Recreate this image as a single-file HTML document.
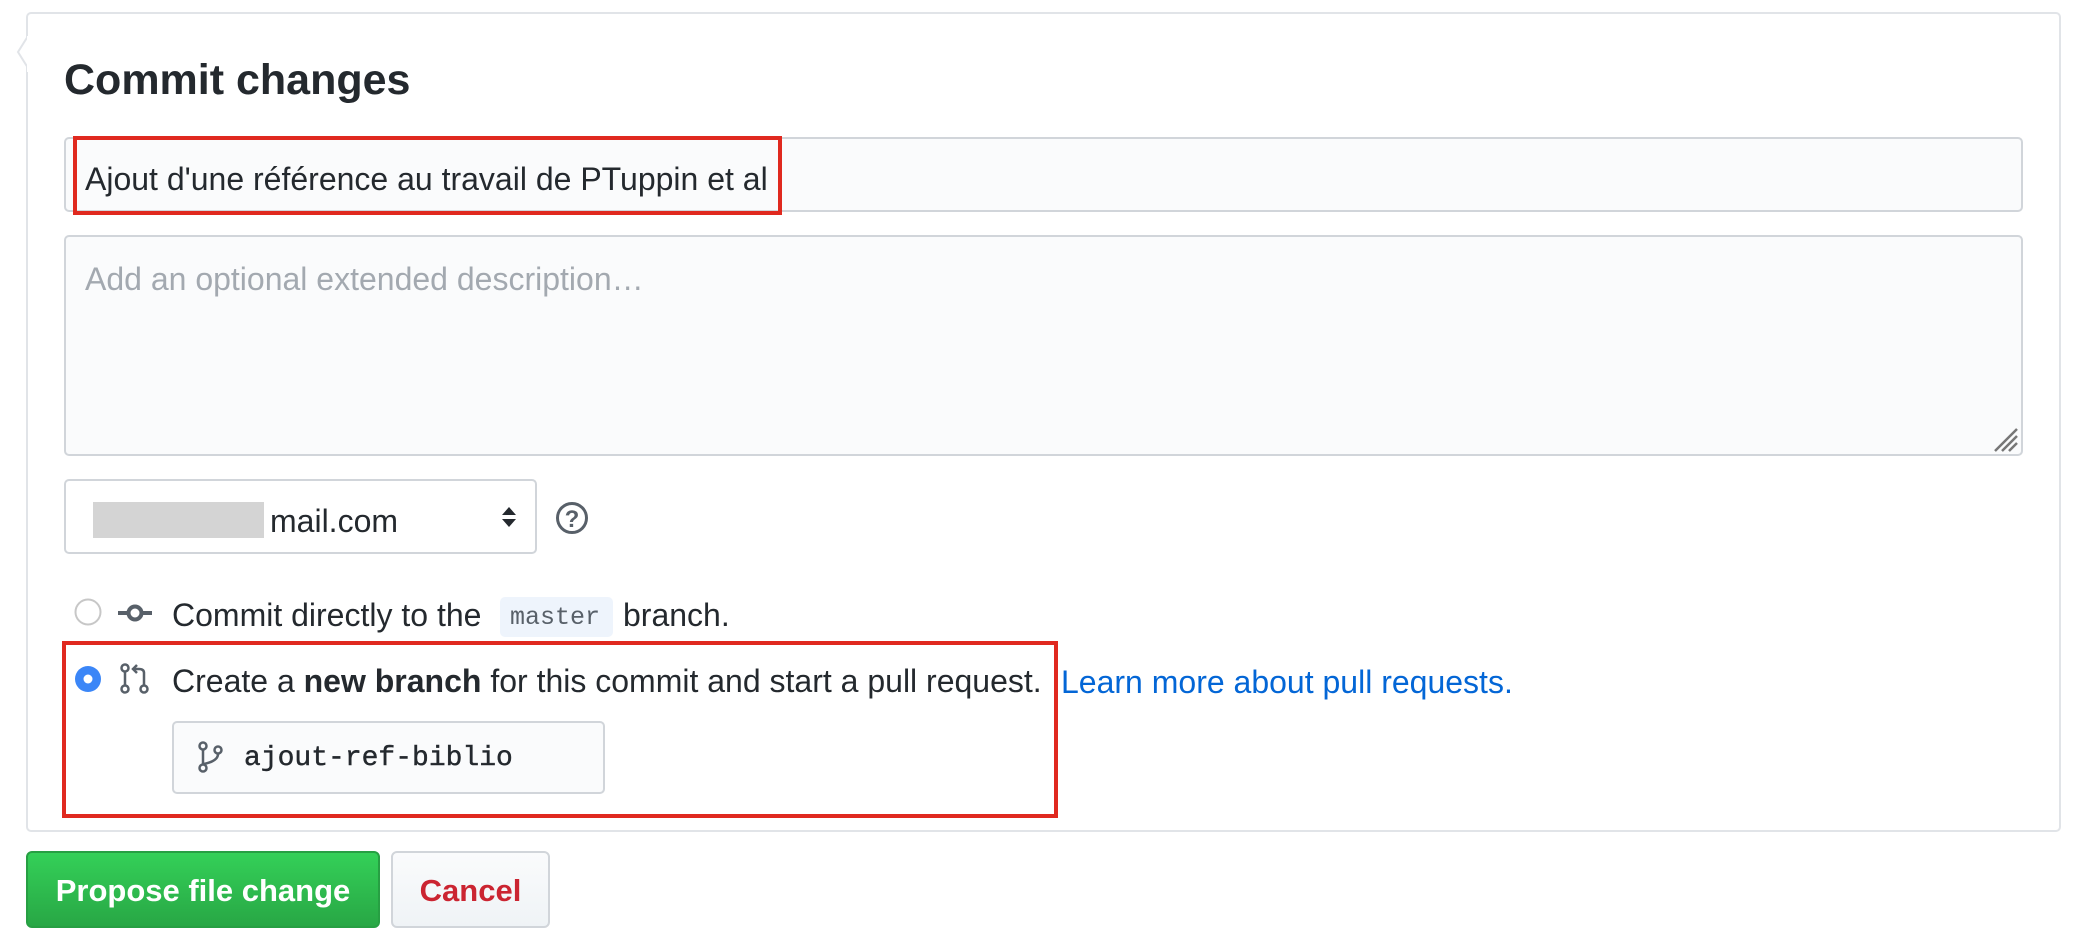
<!DOCTYPE html>
<html><head><meta charset="utf-8"><style>
*{box-sizing:border-box;margin:0;padding:0}
body{width:2078px;height:950px;background:#fff;font-family:"Liberation Sans",Arial,sans-serif;color:#24292e;position:relative;overflow:hidden}
.abs{position:absolute}
.card{left:26px;top:12px;width:2035px;height:820px;border:2px solid #e1e4e8;border-radius:5px}
.t{white-space:nowrap;font-size:32px;line-height:1}
</style></head><body>
<div class="abs card"></div>
<svg class="abs" style="left:8px;top:36px" width="22" height="36"><path d="M20 0 L10 16 L20 32" fill="#fff" stroke="#e1e4e8" stroke-width="2"/><rect x="19" y="0" width="4" height="36" fill="#fff"/></svg>
<div class="abs t" style="left:64px;top:59px;font-size:43px;font-weight:bold">Commit changes</div>

<div class="abs" style="left:64px;top:137px;width:1959px;height:75px;border:2px solid #d1d5da;border-radius:5px;background:#fafbfc"></div>
<div class="abs" style="left:73px;top:136px;width:709px;height:79px;border:4px solid #e0291f"></div>
<div class="abs t" style="left:85px;top:163px">Ajout d'une référence au travail de PTuppin et al</div>

<div class="abs" style="left:64px;top:235px;width:1959px;height:221px;border:2px solid #d1d5da;border-radius:5px;background:#fafbfc"></div>
<div class="abs t" style="left:85px;top:263px;color:#a3a9b0">Add an optional extended description…</div>
<svg class="abs" style="left:1993px;top:427px" width="26" height="26"><g stroke="#777" stroke-width="2.5"><path d="M2 24 L24 2M9 24 L24 9M16 24 L24 16"/></g></svg>

<div class="abs" style="left:64px;top:479px;width:473px;height:75px;border:2px solid #d1d5da;border-radius:5px;background:#fff"></div>
<div class="abs" style="left:93px;top:502px;width:171px;height:36px;background:#d4d4d4"></div>
<div class="abs t" style="left:270px;top:505px">mail.com</div>
<svg class="abs" style="left:500px;top:506px" width="18" height="22"><path d="M9 1 L16 9 H2Z M2 13 H16 L9 21Z" fill="#24292e"/></svg>
<svg class="abs" style="left:554px;top:500px" width="36" height="36"><circle cx="18" cy="18" r="14.5" fill="none" stroke="#586069" stroke-width="3"/><text x="18" y="27" text-anchor="middle" font-size="24" font-weight="bold" fill="#586069" font-family="Liberation Sans">?</text></svg>

<svg class="abs" style="left:74px;top:598px" width="30" height="30"><circle cx="14" cy="14" r="12.5" fill="#fff" stroke="#c7c7c7" stroke-width="2"/></svg>
<svg class="abs" style="left:118px;top:603px" width="34" height="20"><path d="M0 10 H10 M24 10 H34" stroke="#586069" stroke-width="4"/><circle cx="17" cy="10" r="6.5" fill="none" stroke="#586069" stroke-width="4"/></svg>
<div class="abs t" style="left:172px;top:599px">Commit directly to the</div>
<div class="abs" style="left:500px;top:597px;width:113px;height:40px;background:#eef4fc;border-radius:5px"></div>
<div class="abs t" style="left:510px;top:605px;font-family:'Liberation Mono',monospace;font-size:25px;color:#586069">master</div>
<div class="abs t" style="left:623px;top:599px">branch.</div>

<div class="abs" style="left:62px;top:641px;width:996px;height:177px;border:4px solid #e0291f"></div>
<svg class="abs" style="left:74px;top:665px" width="30" height="30"><circle cx="14" cy="14" r="13" fill="#3b86f7"/><circle cx="14" cy="14" r="4.5" fill="#fff"/></svg>
<svg class="abs" style="left:120px;top:663px" width="30" height="32"><g fill="none" stroke="#586069" stroke-width="2.5"><circle cx="5" cy="5" r="3.5"/><circle cx="5" cy="26" r="3.5"/><circle cx="24" cy="26" r="3.5"/><path d="M5 9 V22 M24 22 V10 Q24 6 19 6 H14"/><path d="M17 2 L13 6 L17 10"/></g></svg>
<div class="abs t" style="left:172px;top:665px">Create a <b>new branch</b> for this commit and start a pull request.</div>
<div class="abs t" style="left:1061px;top:666px;color:#0366d6">Learn more about pull requests.</div>

<div class="abs" style="left:172px;top:721px;width:433px;height:73px;border:2px solid #d1d5da;border-radius:5px;background:#fafbfc"></div>
<svg class="abs" style="left:198px;top:741px" width="26" height="32"><g fill="none" stroke="#586069" stroke-width="2.5"><circle cx="5" cy="5" r="3.5"/><circle cx="5" cy="27" r="3.5"/><circle cx="20" cy="9" r="3.5"/><path d="M5 9 V23 M20 13 Q20 20 6 23"/></g></svg>
<div class="abs t" style="left:244px;top:745px;font-family:'Liberation Mono',monospace;font-size:28px;color:#24292e;-webkit-text-stroke:0.4px #24292e">ajout-ref-biblio</div>

<div class="abs" style="left:26px;top:851px;width:354px;height:77px;border:2px solid #279f43;border-radius:6px;background:linear-gradient(#34d058,#28a745)"></div>
<div class="abs t" style="left:26px;top:875px;width:354px;text-align:center;color:#fff;font-weight:bold;font-size:31px">Propose file change</div>
<div class="abs" style="left:391px;top:851px;width:159px;height:77px;border:2px solid #d1d5da;border-radius:6px;background:linear-gradient(#fafbfc,#eff3f6)"></div>
<div class="abs t" style="left:391px;top:875px;width:159px;text-align:center;color:#cb2431;font-weight:bold;font-size:31px">Cancel</div>
</body></html>
